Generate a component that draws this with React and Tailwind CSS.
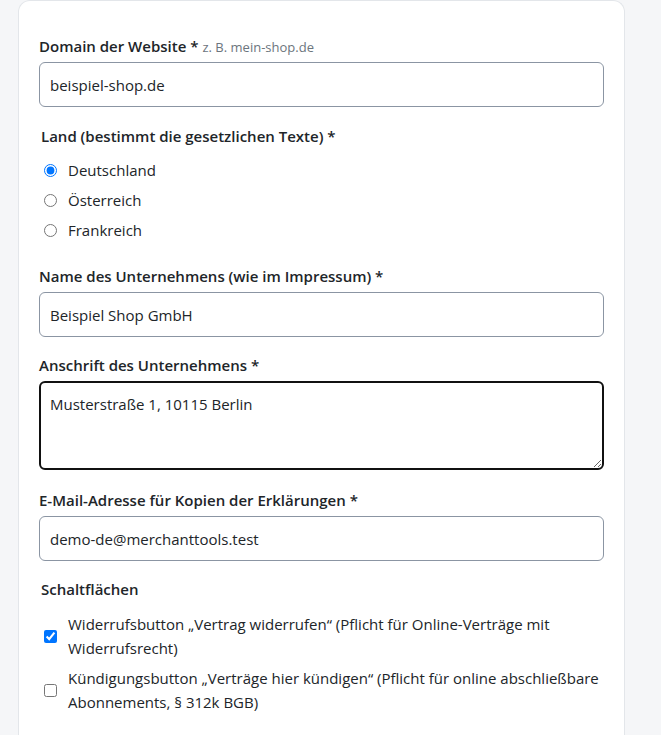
import React, { useState } from 'react';

const font = { fontFamily: '"Open Sans", "Noto Sans", sans-serif' };

const Label = ({ children, hint }) => (
  <label className="flex items-baseline h-[22px] text-[15px] leading-[22px] font-semibold text-[#212529] mb-[5px]">
    {children}
    {hint && <span className="ml-1 text-[13px] font-normal text-[#6c757d]">{hint}</span>}
  </label>
);

const TextInput = ({ value }) => (
  <input
    type="text"
    defaultValue={value}
    className="block w-full h-[45px] px-[10px] rounded-md border border-[#8b95a3] bg-white text-[15px] text-[#212529] outline-none"
    style={font}
  />
);

const App = () => {
  const [country, setCountry] = useState('de');

  return (
    <div className="min-h-screen bg-[#f5f6f8] pl-[18px] pr-[36px]" style={font}>
      <div className="bg-white border border-[#e3e6ea] border-b-0 rounded-t-xl px-[20px] pt-[34px] pb-8">
        {/* Domain */}
        <Label hint="z. B. mein-shop.de">Domain der Website *</Label>
        <TextInput value="beispiel-shop.de" />

        {/* Land */}
        <div className="mt-[18px] pl-[2px]">
          <div className="h-[22px] text-[15px] leading-[22px] font-semibold text-[#212529] mb-[12px]">
            Land (bestimmt die gesetzlichen Texte) *
          </div>
          <div className="flex flex-col gap-[8px]">
            {[
              ['de', 'Deutschland'],
              ['at', 'Österreich'],
              ['fr', 'Frankreich'],
            ].map(([key, name]) => (
              <label key={key} className="flex items-center h-[22px] gap-[11px] text-[15px] leading-[22px] text-[#212529]">
                <input
                  type="radio"
                  name="land"
                  checked={country === key}
                  onChange={() => setCountry(key)}
                  className="m-0 ml-[3px] w-[13px] h-[13px]"
                />
                {name}
              </label>
            ))}
          </div>
        </div>

        {/* Firma */}
        <div className="mt-[24px]">
          <Label>Name des Unternehmens (wie im Impressum) *</Label>
          <TextInput value="Beispiel Shop GmbH" />
        </div>

        <div className="mt-[17px]">
          <Label>Anschrift des Unternehmens *</Label>
          <textarea
            defaultValue="Musterstraße 1, 10115 Berlin"
            className="block w-full h-[89px] px-[9px] py-[10px] rounded-md border-2 border-[#111] bg-white text-[15px] leading-[22px] text-[#212529] outline-none"
            style={font}
          />
        </div>

        <div className="mt-[19px]">
          <Label>E-Mail-Adresse für Kopien der Erklärungen *</Label>
          <TextInput value="demo-de@merchanttools.test" />
        </div>

        {/* Schaltflächen */}
        <div className="mt-[17px] pl-[2px]">
          <div className="h-[22px] text-[15px] leading-[22px] font-semibold text-[#212529]">Schaltflächen</div>
          <div className="mt-[12px] flex flex-col gap-[6px]">
            <label className="flex items-center gap-[11px] text-[15px] leading-[24px] text-[#212529]">
              <input type="checkbox" defaultChecked className="m-0 ml-[3px] w-[13px] h-[13px] shrink-0" />
              <span>Widerrufsbutton „Vertrag widerrufen“ (Pflicht für Online-Verträge mit Widerrufsrecht)</span>
            </label>
            <label className="flex items-center gap-[11px] text-[15px] leading-[24px] text-[#212529]">
              <input type="checkbox" className="m-0 ml-[3px] w-[13px] h-[13px] shrink-0" />
              <span>Kündigungsbutton „Verträge hier kündigen“ (Pflicht für online abschließbare Abonnements, § 312k BGB)</span>
            </label>
          </div>
        </div>
      </div>
    </div>
  );
};

export default App;
